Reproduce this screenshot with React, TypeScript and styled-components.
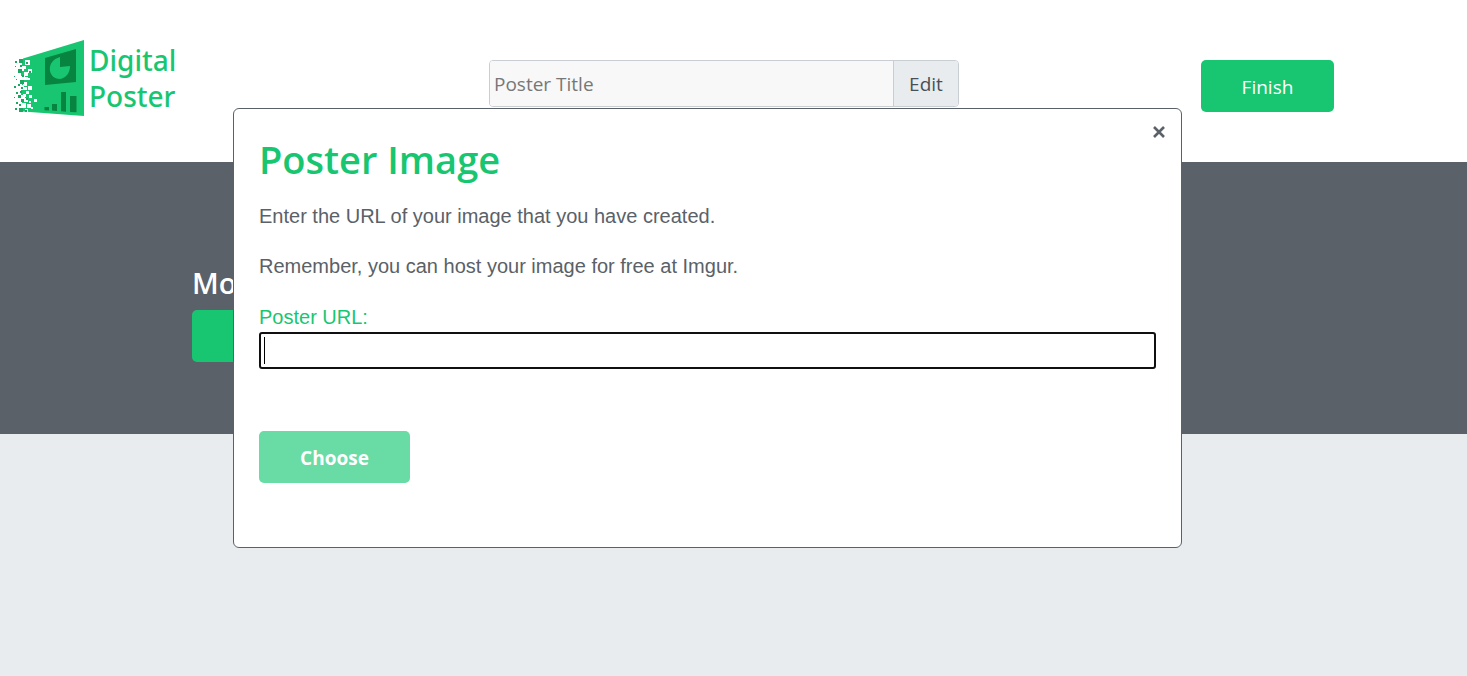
import React, { useState } from "react";
import styled, { createGlobalStyle } from "styled-components";

const green = "#18c671";
const slate = "#5a6168";
const uiFont = '"Segoe UI", "Open Sans", "Noto Sans", sans-serif';

const GlobalStyle = createGlobalStyle`
  *, *::before, *::after { box-sizing: border-box; }
  body {
    margin: 0;
    background: #e8ecee;
    color: ${slate};
    font-family: ${uiFont};
    font-size: 19px;
  }
  button, input { font: inherit; }
`;

const Header = styled.header`
  display: grid;
  grid-template-columns: repeat(3, 1fr);
  align-items: start;
  height: 162px;
  background: #fff;
`;

const Brand = styled.a`
  display: flex;
  gap: 3px;
  padding: 39px 0 0 12px;
  color: ${green};
  font-family: "Segoe UI", "Noto Sans", sans-serif;
  font-size: 28px;
  font-weight: 500;
  line-height: 36px;
  text-decoration: none;
`;

const BrandName = styled.span`
  width: 100px;
  padding-top: 3px;
`;

const TitleForm = styled.form`
  display: flex;
  height: 47px;
  margin: 60px 19px 0 0;
  border: 1px solid #c9ced3;
  border-radius: 4px;
  overflow: hidden;
`;

const TitleInput = styled.input`
  flex: 1;
  min-width: 0;
  padding: 0 4px;
  border: 0;
  background: #f8f8f8;
  color: ${slate};
  &::placeholder { color: #777; opacity: 1; }
`;

const EditButton = styled.button`
  width: 65px;
  padding: 0;
  border: 0;
  border-left: 1px solid #c9ced3;
  background: #e8ecef;
  color: #495057;
`;

const Actions = styled.div`
  display: flex;
  justify-content: flex-end;
  padding: 60px 133px 0 0;
`;

const Button = styled.button<{ $bold?: boolean }>`
  height: 52px;
  min-width: ${(p) => (p.$bold ? 151 : 133)}px;
  padding: 2px 32px 0;
  border: 0;
  border-radius: 5px;
  background: ${green};
  color: #fff;
  font-weight: ${(p) => (p.$bold ? 700 : 400)};
  &:disabled { background: #69dba5; }
`;

const Band = styled.section`
  height: 272px;
  padding: 101px 192px 0;
  background: ${slate};
  color: #fff;
`;

const BandTitle = styled.h2`
  margin: 0 0 7px;
  font-size: 29px;
  font-weight: 600;
  line-height: 40px;
`;

const Overlay = styled.div`
  position: fixed;
  inset: 0;
  padding: 108px 285px 0 233px;
`;

const Dialog = styled.div`
  position: relative;
  padding: 30px 25px 64px;
  border: 1px solid ${slate};
  border-radius: 6px;
  background: #fff;
  font-family: "Liberation Sans", Arial, sans-serif;
  font-size: 20px;
  line-height: 30px;
`;

const Close = styled.button`
  position: absolute;
  top: 13px;
  right: 12px;
  display: flex;
  padding: 0;
  border: 0;
  background: none;
  color: ${slate};
`;

const DialogTitle = styled.h1`
  margin: 0 0 22px;
  color: ${green};
  font-family: ${uiFont};
  font-size: 38px;
  font-weight: 600;
  line-height: 40px;
`;

const Text = styled.p`
  margin: 0 0 20px;
`;

const Label = styled.label`
  display: block;
  padding-top: 1px;
  color: ${green};
`;

const UrlInput = styled.input`
  display: block;
  width: 100%;
  height: 37px;
  margin-bottom: 62px;
  padding: 0 3px;
  border: 2px solid #101010;
  border-radius: 3px;
  outline: 0;
  background: #fff;
  caret-color: transparent;
  font-size: 24px;
  &:focus {
    background: linear-gradient(#000, #000) 3px center / 1px 27px no-repeat #fff;
  }
`;

const DialogActions = styled.div`
  display: flex;
  font-family: ${uiFont};
  font-size: 19px;
`;

/* Squares breaking away from the left edge: x, y, size */
const holes = [
  [25, 30, 5], [23, 36, 3], [28, 39, 4], [24, 42, 4], [25, 47, 3],
  [28, 48, 2], [23, 52, 4], [28, 56, 4], [24, 57, 3], [26, 61, 3],
  [23, 64, 3], [29, 65, 3], [24, 68, 4], [29, 71, 2], [27, 74, 4],
  [23, 74, 3], [25, 79, 3], [34, 69, 3], [31, 77, 2],
];
const bits = [
  [15, 31, 2], [19, 29, 4], [15, 36, 1], [20, 35, 2], [18, 39, 4],
  [14, 46, 1], [22, 45, 2], [16, 49, 1], [20, 50, 4], [14, 56, 2],
  [18, 54, 2], [21, 57, 2], [16, 62, 2], [20, 61, 2], [18, 65, 3],
  [14, 67, 1], [21, 69, 3], [16, 72, 2], [19, 74, 2], [15, 78, 2],
  [19, 78, 4], [26, 32, 2], [26, 68, 2], [29, 41, 2], [25, 80, 2],
];

function Logo() {
  return (
    <svg width="74" height="78" viewBox="12 9 74 78" aria-hidden="true">
      <path
        d="M23 28.500 84 10V86L23 81.500V78H26V73H22V69H25V65H21V60H24V55H22V50H25V46H21V41H24V36H22V32H23Z"
        fill={green}
      />
      <path d="M45 28 76 19V52L45 55Z" fill="#078440" />
      <path d="M60 37V27C53 29 49 34 50 41C51 46 55 49 60 49C66 48 70 43 70 36Z" fill={green} />
      <path d="M44.500 77H49V80.500L44.500 80.200ZM52 74H57V81L52 80.600ZM61 62H66V81.700L61 81.300ZM70 66H76.500V82.300L70 81.900Z" fill="#078440" />
      {holes.map(([x, y, s]) => (
        <rect key={`h${x}-${y}`} x={x} y={y} width={s} height={s} fill="#fff" />
      ))}
      {bits.map(([x, y, s]) => (
        <rect key={`b${x}-${y}`} x={x} y={y} width={s} height={s} fill="#1ba863" />
      ))}
    </svg>
  );
}

export default function App() {
  const [url, setUrl] = useState("");
  return (
    <>
      <GlobalStyle />
      <Header>
        <Brand href="#">
          <Logo />
          <BrandName>Digital Poster</BrandName>
        </Brand>
        <TitleForm>
          <TitleInput type="text" placeholder="Poster Title" aria-label="Poster Title" />
          <EditButton type="button">Edit</EditButton>
        </TitleForm>
        <Actions>
          <Button type="button">Finish</Button>
        </Actions>
      </Header>
      <Band>
        <BandTitle>Mo</BandTitle>
        <Button type="button" aria-label="Mo" />
      </Band>
      <Overlay>
        <Dialog role="dialog" aria-modal="true" aria-labelledby="dialog-title">
          <Close type="button" aria-label="Close">
            <svg width="20" height="20" viewBox="0 0 20 20" fill="none" stroke="currentColor" strokeWidth="2.600">
              <path d="m5 5 10 10M15 5 5 15" />
            </svg>
          </Close>
          <DialogTitle id="dialog-title">Poster Image</DialogTitle>
          <Text>Enter the URL of your image that you have created.</Text>
          <Text>Remember, you can host your image for free at Imgur.</Text>
          <Label htmlFor="poster-url">Poster URL:</Label>
          <UrlInput id="poster-url" type="text" autoFocus value={url} onChange={(e) => setUrl(e.target.value)} />
          <DialogActions>
            <Button type="button" $bold disabled={!url}>Choose</Button>
          </DialogActions>
        </Dialog>
      </Overlay>
    </>
  );
}
